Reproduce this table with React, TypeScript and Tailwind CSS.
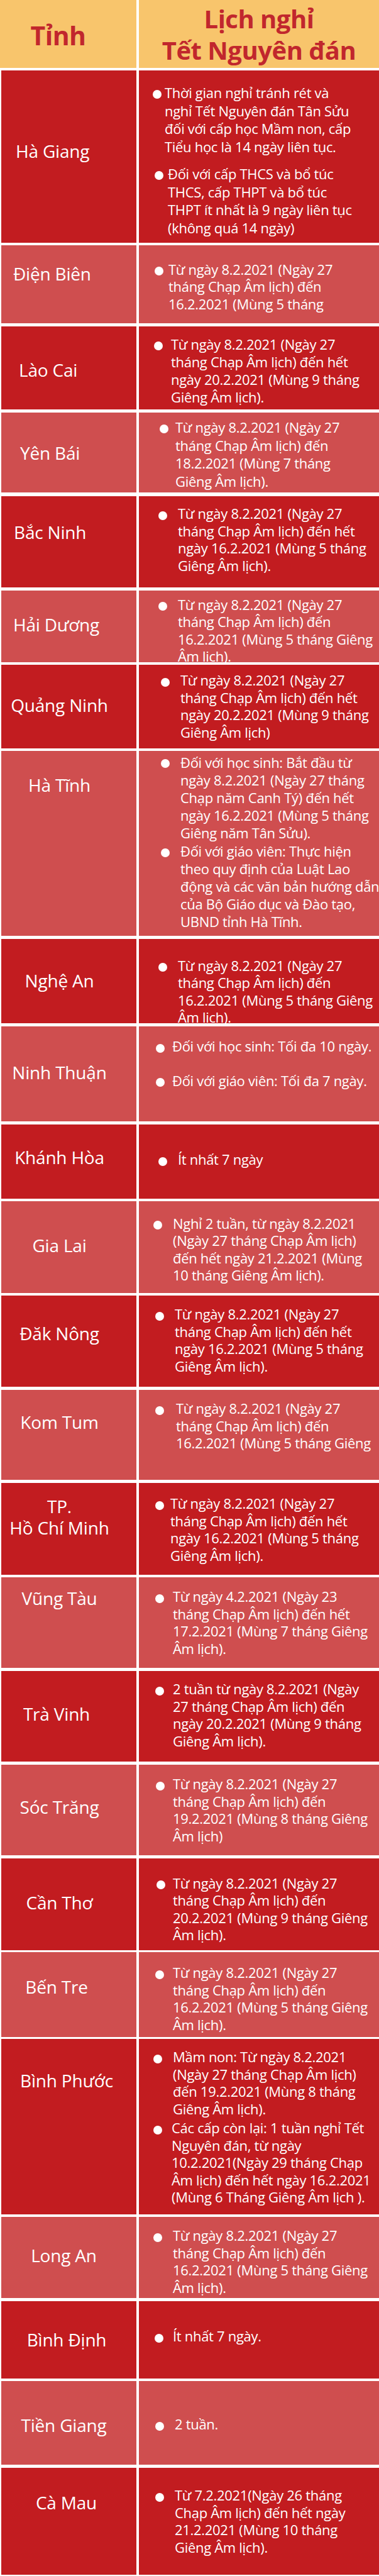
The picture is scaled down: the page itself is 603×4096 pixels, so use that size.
import React from "react";

type Item = { lines: string[]; bx: string; tx: string; mt?: string };
type Row = {
  name: string[];
  nameCls: string;
  h: string;
  mt: string;
  dark: boolean;
  rightCls: string;
  items: Item[];
};

const rows: Row[] = [
  {
    name: ["Hà Giang"],
    nameCls: "justify-start pl-[23px] pt-[111px]",
    h: "h-[274px]",
    mt: "mt-[4px]",
    dark: true,
    rightCls: "pt-[21px] leading-[28.5px]",
    items: [
      {
        bx: "ml-[22px]",
        tx: "ml-[5px]",
        lines: [
          "Thời gian nghỉ tránh rét và",
          "nghỉ Tết Nguyên đán Tân Sửu",
          "đối với cấp học Mầm non, cấp",
          "Tiểu học là 14 ngày liên tục.",
        ],
      },
      {
        mt: "mt-[15px]",
        bx: "ml-[25px]",
        tx: "ml-[7px]",
        lines: [
          "Đối với cấp THCS và bổ túc",
          "THCS, cấp THPT và bổ túc",
          "THPT ít nhất là 9 ngày liên tục",
          "(không quá 14 ngày)",
        ],
      },
    ],
  },
  {
    name: ["Điện Biên"],
    nameCls: "justify-start pl-[19px] pt-[28px]",
    h: "h-[124px]",
    mt: "mt-[4px]",
    dark: false,
    rightCls: "pt-[24.5px] leading-[27.5px]",
    items: [
      {
        bx: "ml-[25px]",
        tx: "ml-[8px]",
        lines: [
          "Từ ngày 8.2.2021 (Ngày 27",
          "tháng Chạp Âm lịch) đến",
          "16.2.2021 (Mùng 5 tháng",
        ],
      },
    ],
  },
  {
    name: ["Lào Cai"],
    nameCls: "justify-start pl-[28px] pt-[52px]",
    h: "h-[132px]",
    mt: "mt-[5px]",
    dark: true,
    rightCls: "pt-[14px] leading-[28px]",
    items: [
      {
        bx: "ml-[24px]",
        tx: "ml-[13px]",
        lines: [
          "Từ ngày 8.2.2021 (Ngày 27",
          "tháng Chạp Âm lịch) đến hết",
          "ngày 20.2.2021 (Mùng 9 tháng",
          "Giêng Âm lịch).",
        ],
      },
    ],
  },
  {
    name: ["Yên Bái"],
    nameCls: "justify-start pl-[30px] pt-[47px]",
    h: "h-[127px]",
    mt: "mt-[5px]",
    dark: false,
    rightCls: "pt-[9px] leading-[28.5px]",
    items: [
      {
        bx: "ml-[33px]",
        tx: "ml-[11px]",
        lines: [
          "Từ ngày 8.2.2021 (Ngày 27",
          "tháng Chạp Âm lịch) đến",
          "18.2.2021 (Mùng 7 tháng",
          "Giêng Âm lịch).",
        ],
      },
    ],
  },
  {
    name: ["Bắc Ninh"],
    nameCls: "justify-start pl-[20px] pt-[40px]",
    h: "h-[145px]",
    mt: "mt-[6px]",
    dark: true,
    rightCls: "pt-[14px] leading-[27.5px]",
    items: [
      {
        bx: "ml-[31px]",
        tx: "ml-[17px]",
        lines: [
          "Từ ngày 8.2.2021 (Ngày 27",
          "tháng Chạp Âm lịch) đến hết",
          "ngày 16.2.2021 (Mùng 5 tháng",
          "Giêng Âm lịch).",
        ],
      },
    ],
  },
  {
    name: ["Hải Dương"],
    nameCls: "justify-start pl-[19px] pt-[37px]",
    h: "h-[114px]",
    mt: "mt-[5px]",
    dark: false,
    rightCls: "pt-[8.5px] leading-[27.5px]",
    items: [
      {
        bx: "ml-[31px]",
        tx: "ml-[17px]",
        lines: [
          "Từ ngày 8.2.2021 (Ngày 27",
          "tháng Chạp Âm lịch) đến",
          "16.2.2021 (Mùng 5 tháng Giêng",
          "Âm lịch).",
        ],
      },
    ],
  },
  {
    name: ["Quảng Ninh"],
    nameCls: "justify-center pr-[30px] pt-[47px]",
    h: "h-[133px]",
    mt: "mt-[4px]",
    dark: true,
    rightCls: "pt-[11px] leading-[27.5px]",
    items: [
      {
        bx: "ml-[35px]",
        tx: "ml-[17px]",
        lines: [
          "Từ ngày 8.2.2021 (Ngày 27",
          "tháng Chạp Âm lịch) đến hết",
          "ngày 20.2.2021 (Mùng 9 tháng",
          "Giêng Âm lịch)",
        ],
      },
    ],
  },
  {
    name: ["Hà Tĩnh"],
    nameCls: "justify-center pr-[30px] pt-[37px]",
    h: "h-[294px]",
    mt: "mt-[4px]",
    dark: false,
    rightCls: "pt-[3.5px] leading-[28px]",
    items: [
      {
        bx: "ml-[35px]",
        tx: "ml-[17px]",
        lines: [
          "Đối với học sinh: Bắt đầu từ",
          "ngày 8.2.2021 (Ngày 27 tháng",
          "Chạp năm Canh Tý) đến hết",
          "ngày 16.2.2021 (Mùng 5 tháng",
          "Giêng năm Tân Sửu).",
        ],
      },
      {
        mt: "mt-[1.5px]",
        bx: "ml-[35px]",
        tx: "ml-[17px]",
        lines: [
          "Đối với giáo viên: Thực hiện",
          "theo quy định của Luật Lao",
          "động và các văn bản hướng dẫn",
          "của Bộ Giáo dục và Đào tạo,",
          "UBND tỉnh Hà Tĩnh.",
        ],
      },
    ],
  },
  {
    name: ["Nghệ An"],
    nameCls: "justify-center pr-[30px] pt-[49px]",
    h: "h-[134px]",
    mt: "mt-[5px]",
    dark: true,
    rightCls: "pt-[28.5px] leading-[27.5px]",
    items: [
      {
        bx: "ml-[31px]",
        tx: "ml-[17px]",
        lines: [
          "Từ ngày 8.2.2021 (Ngày 27",
          "tháng Chạp Âm lịch) đến",
          "16.2.2021 (Mùng 5 tháng Giêng",
          "Âm lịch).",
        ],
      },
    ],
  },
  {
    name: ["Ninh Thuận"],
    nameCls: "justify-center pr-[30px] pt-[56px]",
    h: "h-[151px]",
    mt: "mt-[5px]",
    dark: false,
    rightCls: "pt-[18px] leading-[27.5px]",
    items: [
      {
        bx: "ml-[27px]",
        tx: "ml-[12px]",
        lines: ["Đối với học sinh: Tối đa 10 ngày."],
      },
      {
        mt: "mt-[27px]",
        bx: "ml-[27px]",
        tx: "ml-[12px]",
        lines: ["Đối với giáo viên: Tối đa 7 ngày."],
      },
    ],
  },
  {
    name: ["Khánh Hòa"],
    nameCls: "justify-center pr-[30px] pt-[35px]",
    h: "h-[118px]",
    mt: "mt-[5px]",
    dark: true,
    rightCls: "pt-[42px] leading-[27.5px]",
    items: [{ bx: "ml-[31px]", tx: "ml-[17px]", lines: ["Ít nhất 7 ngày"] }],
  },
  {
    name: ["Gia Lai"],
    nameCls: "justify-center pr-[30px] pt-[53px]",
    h: "h-[146px]",
    mt: "mt-[4px]",
    dark: false,
    rightCls: "pt-[21.5px] leading-[27.5px]",
    items: [
      {
        bx: "ml-[23px]",
        tx: "ml-[17px]",
        lines: [
          "Nghỉ 2 tuần, từ ngày 8.2.2021",
          "(Ngày 27 tháng Chạp Âm lịch)",
          "đến hết ngày 21.2.2021 (Mùng",
          "10 tháng Giêng Âm lịch).",
        ],
      },
    ],
  },
  {
    name: ["Đăk Nông"],
    nameCls: "justify-center pr-[30px] pt-[43px]",
    h: "h-[145px]",
    mt: "mt-[4px]",
    dark: true,
    rightCls: "pt-[16px] leading-[27.5px]",
    items: [
      {
        bx: "ml-[26px]",
        tx: "ml-[17px]",
        lines: [
          "Từ ngày 8.2.2021 (Ngày 27",
          "tháng Chạp Âm lịch) đến hết",
          "ngày 16.2.2021 (Mùng 5 tháng",
          "Giêng Âm lịch).",
        ],
      },
    ],
  },
  {
    name: ["Kom Tum"],
    nameCls: "justify-center pr-[30px] pt-[34px]",
    h: "h-[143px]",
    mt: "mt-[5px]",
    dark: false,
    rightCls: "pt-[16px] leading-[27.5px]",
    items: [
      {
        bx: "ml-[26px]",
        tx: "ml-[19px]",
        lines: [
          "Từ ngày 8.2.2021 (Ngày 27",
          "tháng Chạp Âm lịch) đến",
          "16.2.2021 (Mùng 5 tháng Giêng",
        ],
      },
    ],
  },
  {
    name: ["TP.", "Hồ Chí Minh"],
    nameCls: "justify-center pr-[30px] pt-[20px] leading-[40px]",
    h: "h-[146px]",
    mt: "mt-[5px]",
    dark: true,
    rightCls: "pt-[19px] leading-[27.5px]",
    items: [
      {
        bx: "ml-[26px]",
        tx: "ml-[10px]",
        lines: [
          "Từ ngày 8.2.2021 (Ngày 27",
          "tháng Chạp Âm lịch) đến hết",
          "ngày 16.2.2021 (Mùng 5 tháng",
          "Giêng Âm lịch).",
        ],
      },
    ],
  },
  {
    name: ["Vũng Tàu"],
    nameCls: "justify-center pr-[30px] pt-[16px]",
    h: "h-[144px]",
    mt: "mt-[4px]",
    dark: false,
    rightCls: "pt-[17px] leading-[27.5px]",
    items: [
      {
        bx: "ml-[26px]",
        tx: "ml-[14px]",
        lines: [
          "Từ ngày 4.2.2021 (Ngày 23",
          "tháng Chạp Âm lịch) đến hết",
          "17.2.2021 (Mùng 7 tháng Giêng",
          "Âm lịch).",
        ],
      },
    ],
  },
  {
    name: ["Trà Vinh"],
    nameCls: "justify-center pr-[39px] pt-[51px]",
    h: "h-[144px]",
    mt: "mt-[5px]",
    dark: true,
    rightCls: "pt-[15px] leading-[27.5px]",
    items: [
      {
        bx: "ml-[26px]",
        tx: "ml-[14px]",
        lines: [
          "2 tuần từ ngày 8.2.2021 (Ngày",
          "27 tháng Chạp Âm lịch) đến",
          "ngày 20.2.2021 (Mùng 9 tháng",
          "Giêng Âm lịch).",
        ],
      },
    ],
  },
  {
    name: ["Sóc Trăng"],
    nameCls: "justify-center pr-[30px] pt-[50px]",
    h: "h-[144px]",
    mt: "mt-[5px]",
    dark: false,
    rightCls: "pt-[17px] leading-[27.5px]",
    items: [
      {
        bx: "ml-[27px]",
        tx: "ml-[13px]",
        lines: [
          "Từ ngày 8.2.2021 (Ngày 27",
          "tháng Chạp Âm lịch) đến",
          "19.2.2021 (Mùng 8 tháng Giêng",
          "Âm lịch)",
        ],
      },
    ],
  },
  {
    name: ["Cần Thơ"],
    nameCls: "justify-center pr-[30px] pt-[53px]",
    h: "h-[146px]",
    mt: "mt-[5px]",
    dark: true,
    rightCls: "pt-[25.5px] leading-[27.5px]",
    items: [
      {
        bx: "ml-[28px]",
        tx: "ml-[12px]",
        lines: [
          "Từ ngày 8.2.2021 (Ngày 27",
          "tháng Chạp Âm lịch) đến",
          "20.2.2021 (Mùng 9 tháng Giêng",
          "Âm lịch).",
        ],
      },
    ],
  },
  {
    name: ["Bến Tre"],
    nameCls: "justify-center pr-[39px] pt-[38px]",
    h: "h-[135px]",
    mt: "mt-[3px]",
    dark: false,
    rightCls: "pt-[19px] leading-[27.5px]",
    items: [
      {
        bx: "ml-[26px]",
        tx: "ml-[14px]",
        lines: [
          "Từ ngày 8.2.2021 (Ngày 27",
          "tháng Chạp Âm lịch) đến",
          "16.2.2021 (Mùng 5 tháng Giêng",
          "Âm lịch).",
        ],
      },
    ],
  },
  {
    name: ["Bình Phước"],
    nameCls: "justify-center pr-[7px] pt-[49px]",
    h: "h-[279px]",
    mt: "mt-[3px]",
    dark: true,
    rightCls: "pt-[15px] leading-[27.5px]",
    items: [
      {
        bx: "ml-[23px]",
        tx: "ml-[17px]",
        lines: [
          "Mầm non: Từ ngày 8.2.2021",
          "(Ngày 27 tháng Chạp Âm lịch)",
          "đến 19.2.2021 (Mùng 8 tháng",
          "Giêng Âm lịch).",
        ],
      },
      {
        mt: "mt-[3px]",
        bx: "ml-[23px]",
        tx: "ml-[15px]",
        lines: [
          "Các cấp còn lại: 1 tuần nghỉ Tết",
          "Nguyên đán, từ ngày",
          "10.2.2021(Ngày 29 tháng Chạp",
          "Âm lịch) đến hết ngày 16.2.2021",
          "(Mùng 6 Tháng Giêng Âm lịch ).",
        ],
      },
    ],
  },
  {
    name: ["Long An"],
    nameCls: "justify-center pr-[16px] pt-[44px]",
    h: "h-[129px]",
    mt: "mt-[4px]",
    dark: false,
    rightCls: "pt-[16px] leading-[27.5px]",
    items: [
      {
        bx: "ml-[23px]",
        tx: "ml-[17px]",
        lines: [
          "Từ ngày 8.2.2021 (Ngày 27",
          "tháng Chạp Âm lịch) đến",
          "16.2.2021 (Mùng 5 tháng Giêng",
          "Âm lịch).",
        ],
      },
    ],
  },
  {
    name: ["Bình Định"],
    nameCls: "justify-center pr-[7px] pt-[44px]",
    h: "h-[123px]",
    mt: "mt-[5px]",
    dark: true,
    rightCls: "pt-[42px] leading-[27.5px]",
    items: [{ bx: "ml-[25px]", tx: "ml-[15px]", lines: ["Ít nhất 7 ngày."] }],
  },
  {
    name: ["Tiền Giang"],
    nameCls: "justify-center pr-[16px] pt-[53px]",
    h: "h-[133px]",
    mt: "mt-[4px]",
    dark: false,
    rightCls: "pt-[55px] leading-[27.5px]",
    items: [{ bx: "ml-[26px]", tx: "ml-[17px]", lines: ["2 tuần."] }],
  },
  {
    name: ["Cà Mau"],
    nameCls: "justify-center pr-[8px] pt-[38px]",
    h: "h-[170px]",
    mt: "mt-[5px]",
    dark: true,
    rightCls: "pt-[30px] leading-[27.5px]",
    items: [
      {
        bx: "ml-[26px]",
        tx: "ml-[17px]",
        lines: [
          "Từ 7.2.2021(Ngày 26 tháng",
          "Chạp Âm lịch) đến hết ngày",
          "21.2.2021 (Mùng 10 tháng",
          "Giêng Âm lịch).",
        ],
      },
    ],
  },
];

function Bullet({ item }: { item: Item }) {
  return (
    <div className={`flex items-start ${item.mt ?? ""}`}>
      <span className={`mt-[9.5px] h-[14px] w-[14px] shrink-0 rounded-full bg-white ${item.bx}`} />
      <div className={`whitespace-nowrap ${item.tx}`}>
        {item.lines.map((l, i) => (
          <div key={i}>{l}</div>
        ))}
      </div>
    </div>
  );
}

export default function App() {
  return (
    <div className="w-[603px] bg-white pb-[2px] font-['Open_Sans','Noto_Sans',sans-serif] text-white">
      <div className="flex h-[108px]">
        <div className="flex w-[217px] items-start justify-center bg-[#f8c56c] pr-[32px] pt-[31px]">
          <span className="text-[41px] font-bold leading-[50px] tracking-[-0.5px] text-[#c1272d]">Tỉnh</span>
        </div>
        <div className="ml-[4px] flex-1 bg-[#f8c56c] pt-[4.5px] text-center text-[40px] font-bold leading-[50px] tracking-[-0.5px] text-[#c1272d]">
          <div>Lịch nghỉ</div>
          <div>Tết Nguyên đán</div>
        </div>
      </div>

      {rows.map((r, idx) => {
        const bg = r.dark ? "bg-[#c21c20]" : "bg-[#cf4e4f]";
        return (
          <div key={idx} className={`flex ${r.h} ${r.mt}`}>
            <div className={`ml-[2px] flex w-[215px] items-start overflow-hidden ${bg} ${r.nameCls}`}>
              <div className="text-center text-[28px] leading-[34px] tracking-[-0.2px] whitespace-nowrap">
                {r.name.map((n, i) => (
                  <div key={i}>{n}</div>
                ))}
              </div>
            </div>
            <div className={`ml-[4px] flex flex-1 flex-col overflow-hidden text-[22px] tracking-[-0.3px] ${bg} ${r.rightCls}`}>
              {r.items.map((it, i) => (
                <Bullet key={i} item={it} />
              ))}
            </div>
          </div>
        );
      })}
    </div>
  );
}
